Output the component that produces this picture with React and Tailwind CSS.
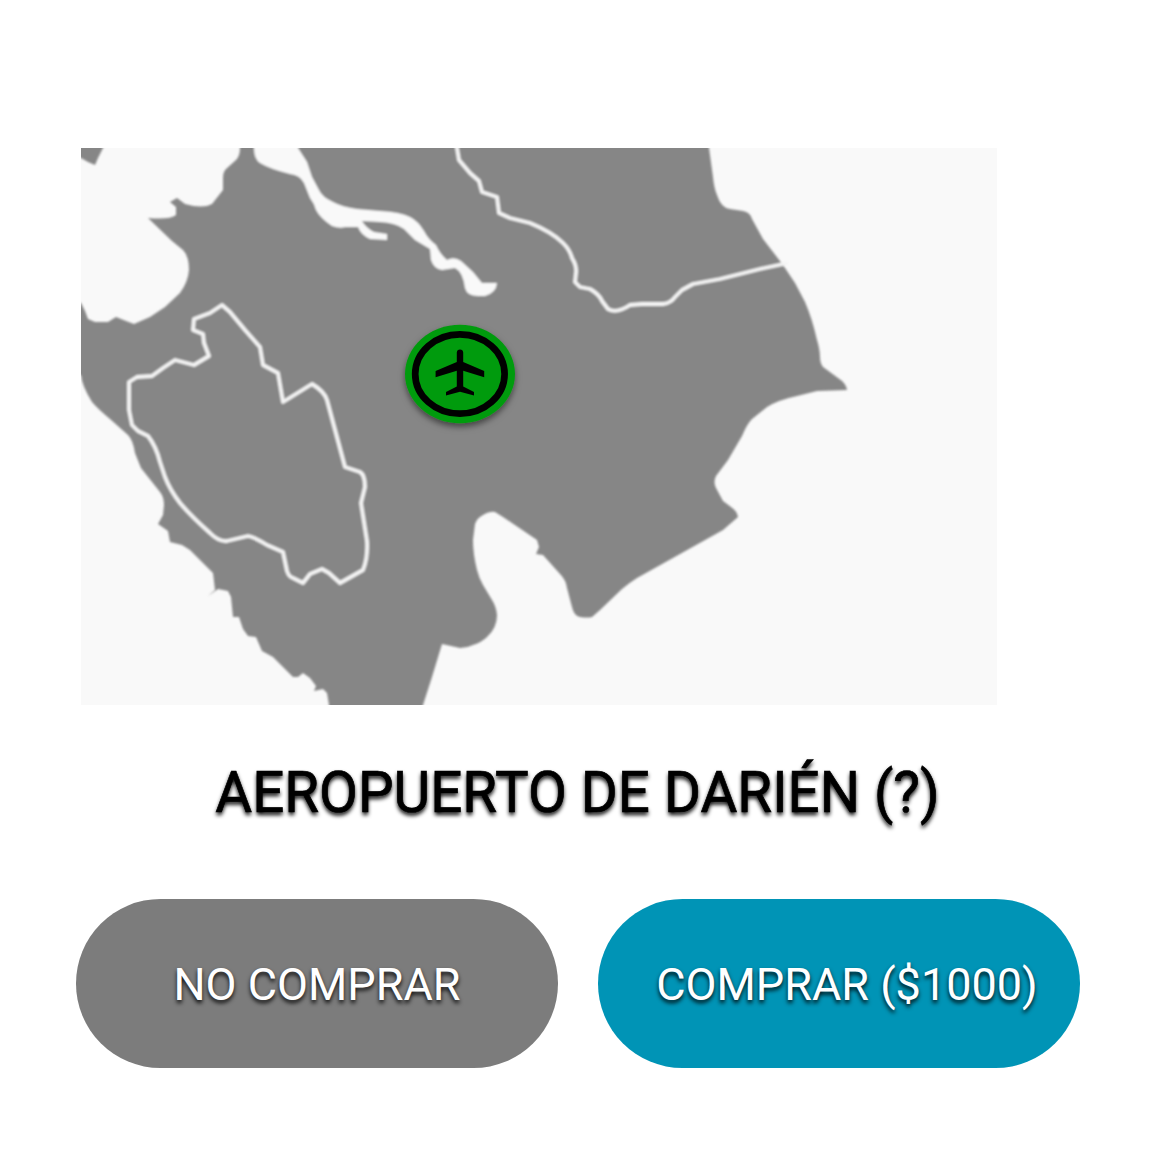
const LAND =
  "M240 140V148Q240 156 236 160L226 169Q223 172 223 178V190L212 204Q203 209 185 204L177 198L170 202L176 207L176 215Q170 220 148 218L172 241L183 250Q189 256 189 270Q188 282 180 293L165 307L150 317L134 324L126 321L116 317L108 322L95 322L88 319L85 311L81 303L70 300V375L81 375Q82 386 92 402Q98 409 110 419L128 435Q133 440 135 453L141 468L160 492Q164 497 164 505L163 515L158 524L168 531L170 542L182 545L190 550L213 573L215 590L208 596L218 589L228 591L231 597L233 617L239 617L243 629L248 636L256 637L262 651L273 657L293 677L298 677L303 673L310 678L316 686L314 691L323 689L327 693L329 705V715H420L423 705L432 677L442 644L460 648Q467 648 473 645Q482 642 487 637Q497 628 497 615Q496 606 492 600L483 585Q479 578 477 570Q473 554 473 540L475 524Q477 518 483 515Q490 511 495 512L503 517L537 540L539 547L536 554L543 555L560 574Q566 580 567 588L572 607Q574 616 580 617Q588 618 592 617L600 610L622 589Q629 583 637 578L723 530L738 517Q737 511 731 507L723 501L716 488Q713 482 716 476L728 460L742 436Q747 424 752 419L767 407Q778 400 797 396L817 391L847 390Q846 383 838 378L823 367Q820 363 820 357Q820 350 817 340Q812 318 805 302L795 283L783 265L763 239L752 219Q750 212 743 211L730 209Q721 208 717 195Q714 188 713 177L709 148V140Z";
const ISLAND = "M70 140H106L103 148L98 158L95 165L88 162L81 158L70 156Z";
const RIVER =
  "M254 140V148Q254 159 260 163Q270 169 290 174Q300 175 304 183L310 198Q314 203 316 210Q320 218 332 226Q340 229 345 227L358 227Q361 235 370 239L387 240V234L374 232Q366 228 362 221L380 222Q396 223 404 229L415 240L430 249L431 260Q434 269 442 270L455 268Q463 272 465 288Q467 296 478 296H485Q496 293 497 283L482 283L473 272L461 261Q454 256 447 260Q440 254 436 245Q428 239 424 231Q418 221 410 217Q400 212 380 211L357 209Q342 207 333 202Q322 197 319 190L312 177L307 162L298 148V140Z";
const NORTH_BORDER =
  "M456 140L457 148L459 160L470 173L479 181L482 192L497 197L499 213L510 218L530 223Q552 232 563 243Q570 250 572 258Q577 266 576 273L575 282L580 287L590 289Q599 294 602 301L608 309Q617 314 630 305L642 304L663 304Q671 303 675 297L682 290L693 284L720 279L760 269L788 263";
const WEST_BORDER =
  "M222 305L210 313L194 319L193 330L203 334L204 343L209 356L194 365L175 360L163 368L152 376L137 377L129 382V410L132 425L138 431L148 436Q156 446 160 462L165 477Q170 490 180 503Q191 516 210 533Q219 542 227 541L248 536Q254 537 267 545L283 552L287 571Q289 577 293 578L303 583L310 574L322 569L329 573L340 583L363 570Q368 558 367 541L361 503L365 487Q365 475 360 472L345 467L327 400Q324 391 312 384L283 402L278 373L263 365L260 347L245 330L230 312Z";

function TerritoryMap() {
  return (
    <svg viewBox="81 148 916 557" className="ml-[5px] block h-[557px] w-[916px] bg-[#f9f9f9]">
      <defs>
        <filter id="soften">
          <feGaussianBlur stdDeviation="0.9" />
        </filter>
        <filter id="markerShadow" x="-20%" y="-20%" width="140%" height="150%">
          <feDropShadow dx="0" dy="3.5" stdDeviation="3" floodColor="#000" floodOpacity="0.5" />
        </filter>
      </defs>
      <g filter="url(#soften)" strokeLinejoin="round">
        <path d={LAND} fill="#868686" />
        <path d={ISLAND} fill="#868686" />
        <path d={RIVER} fill="#f9f9f9" />
        <path d={NORTH_BORDER} fill="none" stroke="#f4f4f4" strokeWidth="3.8" />
        <path d={WEST_BORDER} fill="none" stroke="#f4f4f4" strokeWidth="3.8" />
      </g>
      <ellipse cx="460" cy="374" rx="55" ry="49.2" fill="#009b0e" filter="url(#markerShadow)" />
      <ellipse cx="459.9" cy="374" rx="44.7" ry="39.7" fill="none" stroke="#000" strokeWidth="6.7" />
      <path
        d="M456.8 352.5Q457 349.4 460 349.4Q463 349.4 463.2 352.5V362L484.2 371V377.3L463.2 370.8V386.5L474 392V395.6L460 391.8L446 395.6V392L456.8 386.5V370.8L435.6 377.3V371L456.8 362Z"
        fill="#000"
      />
    </svg>
  );
}

function ActionButton({ tone, children }) {
  return (
    <button
      className={`flex h-[169px] w-[482px] shrink-0 items-center justify-center rounded-full pt-[2px] text-[45px] leading-none text-white [text-shadow:0_3px_4px_rgba(0,0,0,0.9)] ${tone}`}
    >
      {children}
    </button>
  );
}

export default function App() {
  return (
    <main className="h-[1155px] w-[1155px] overflow-hidden bg-white pl-[76px] pr-[76px] pt-[148px] font-[Roboto,sans-serif]">
      <TerritoryMap />
      <h1 className="mt-[54px] flex h-[64px] items-center justify-center whitespace-nowrap pt-[5px] text-[56.5px] font-normal leading-none text-black [-webkit-text-stroke:0.7px_#000] [text-shadow:0_3px_4px_#000]">
        AEROPUERTO DE DARIÉN (?)
      </h1>
      <div className="mt-[76px] flex gap-[40px]">
        <ActionButton tone="bg-[#7c7c7c]">NO COMPRAR</ActionButton>
        <ActionButton tone="bg-[#0094b6] pl-[16px]">COMPRAR ($1000)</ActionButton>
      </div>
    </main>
  );
}
